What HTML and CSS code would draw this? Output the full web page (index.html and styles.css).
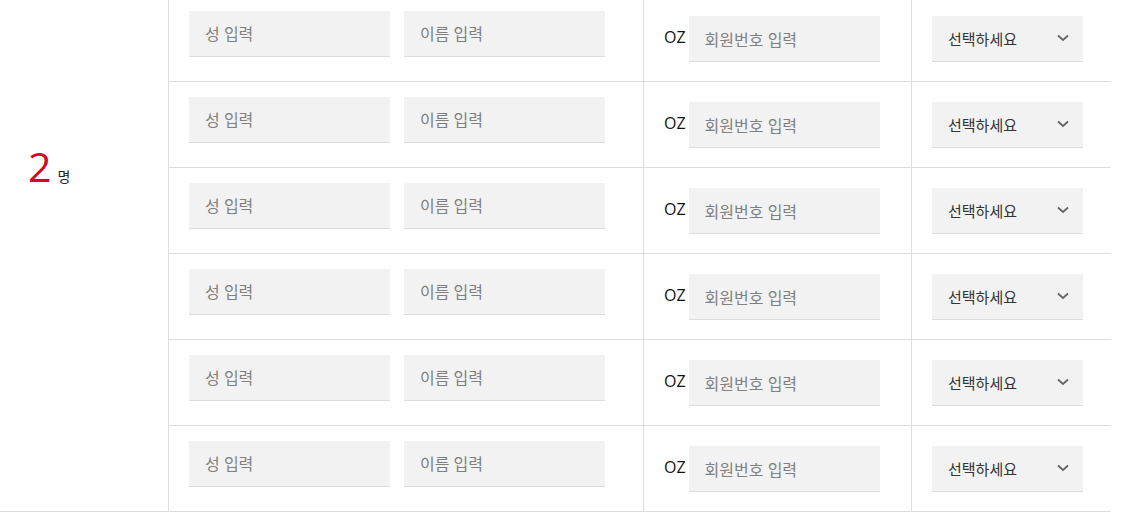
FILE: index.html
```html
<!DOCTYPE html>
<html lang="ko">
<head>
    <meta charset="UTF-8">
    <title>탑승객 정보</title>
    <link rel="stylesheet" href="styles.css">
</head>
<body>
    <div class="people">
        <div class="count"><span class="num">2</span><span class="unit">명</span></div>

        <div class="rows">
            <div class="row">
                <div class="name-cell">
                    <input type="text" class="field" placeholder="성 입력">
                    <input type="text" class="field" placeholder="이름 입력">
                </div>
                <div class="member-cell">
                    <span class="prefix">OZ</span>
                    <input type="text" class="field member" placeholder="회원번호 입력">
                </div>
                <div class="type-cell">
                    <div class="select">선택하세요
                        <svg width="12" height="8" viewBox="0 0 12 8"><polyline points="1,1.5 6,6 11,1.5" fill="none" stroke="#666" stroke-width="1.8"/></svg>
                    </div>
                </div>
            </div>
            <div class="row">
                <div class="name-cell">
                    <input type="text" class="field" placeholder="성 입력">
                    <input type="text" class="field" placeholder="이름 입력">
                </div>
                <div class="member-cell">
                    <span class="prefix">OZ</span>
                    <input type="text" class="field member" placeholder="회원번호 입력">
                </div>
                <div class="type-cell">
                    <div class="select">선택하세요
                        <svg width="12" height="8" viewBox="0 0 12 8"><polyline points="1,1.5 6,6 11,1.5" fill="none" stroke="#666" stroke-width="1.8"/></svg>
                    </div>
                </div>
            </div>
            <div class="row">
                <div class="name-cell">
                    <input type="text" class="field" placeholder="성 입력">
                    <input type="text" class="field" placeholder="이름 입력">
                </div>
                <div class="member-cell">
                    <span class="prefix">OZ</span>
                    <input type="text" class="field member" placeholder="회원번호 입력">
                </div>
                <div class="type-cell">
                    <div class="select">선택하세요
                        <svg width="12" height="8" viewBox="0 0 12 8"><polyline points="1,1.5 6,6 11,1.5" fill="none" stroke="#666" stroke-width="1.8"/></svg>
                    </div>
                </div>
            </div>
            <div class="row">
                <div class="name-cell">
                    <input type="text" class="field" placeholder="성 입력">
                    <input type="text" class="field" placeholder="이름 입력">
                </div>
                <div class="member-cell">
                    <span class="prefix">OZ</span>
                    <input type="text" class="field member" placeholder="회원번호 입력">
                </div>
                <div class="type-cell">
                    <div class="select">선택하세요
                        <svg width="12" height="8" viewBox="0 0 12 8"><polyline points="1,1.5 6,6 11,1.5" fill="none" stroke="#666" stroke-width="1.8"/></svg>
                    </div>
                </div>
            </div>
            <div class="row">
                <div class="name-cell">
                    <input type="text" class="field" placeholder="성 입력">
                    <input type="text" class="field" placeholder="이름 입력">
                </div>
                <div class="member-cell">
                    <span class="prefix">OZ</span>
                    <input type="text" class="field member" placeholder="회원번호 입력">
                </div>
                <div class="type-cell">
                    <div class="select">선택하세요
                        <svg width="12" height="8" viewBox="0 0 12 8"><polyline points="1,1.5 6,6 11,1.5" fill="none" stroke="#666" stroke-width="1.8"/></svg>
                    </div>
                </div>
            </div>
            <div class="row">
                <div class="name-cell">
                    <input type="text" class="field" placeholder="성 입력">
                    <input type="text" class="field" placeholder="이름 입력">
                </div>
                <div class="member-cell">
                    <span class="prefix">OZ</span>
                    <input type="text" class="field member" placeholder="회원번호 입력">
                </div>
                <div class="type-cell">
                    <div class="select">선택하세요
                        <svg width="12" height="8" viewBox="0 0 12 8"><polyline points="1,1.5 6,6 11,1.5" fill="none" stroke="#666" stroke-width="1.8"/></svg>
                    </div>
                </div>
            </div>
        </div>
    </div>
</body>
</html>
```

FILE: styles.css
```css
body {
    margin: 0;
    background: #fff;
    font-family: "Noto Sans", "Noto Sans CJK KR", sans-serif;
    color: #222;
}

.people {
    display: grid;
    grid-template-columns: 169px 942px;
    width: 1111px;
    margin-top: -5px;
    border-bottom: 1px solid #ddd;
}

.count {
    border-right: 1px solid #ddd;
    padding: 151px 0 0 28px;
    line-height: 1;
}

.num {
    font-family: "Open Sans", sans-serif;
    font-size: 41px;
    color: #d10a1e;
}

.unit {
    font-size: 14px;
    margin-left: 6px;
    color: #222;
}

.row {
    display: flex;
    height: 86px;
    box-sizing: border-box;
    border-top: 1px solid #ddd;
}

.row > div {
    box-sizing: border-box;
    flex-shrink: 0;
}

.field {
    box-sizing: border-box;
    width: 201px;
    height: 46px;
    margin: 0;
    padding: 0 16px;
    border: none;
    border-bottom: 1px solid #ddd;
    background: #f2f2f2;
    font-family: "Noto Sans", "Noto Sans CJK KR", sans-serif;
    font-size: 16px;
    color: #333;
    outline: none;
}

.field::placeholder {
    color: #808080;
}

.name-cell {
    width: 475px;
    border-right: 1px solid #ddd;
    display: flex;
    gap: 14px;
    align-items: flex-start;
    padding: 15px 0 0 20px;
}

.member-cell {
    width: 268px;
    border-right: 1px solid #ddd;
    display: flex;
    align-items: center;
    padding-left: 20px;
}

.prefix {
    font-family: "Open Sans", sans-serif;
    font-size: 16px;
    color: #111;
    margin-right: 3px;
    margin-top: -4px;
}

.field.member {
    width: 191px;
    padding-top: 3px;
}

.type-cell {
    width: 199px;
    display: flex;
    align-items: center;
    padding-left: 20px;
}

.select {
    box-sizing: border-box;
    width: 151px;
    height: 46px;
    display: flex;
    align-items: center;
    justify-content: space-between;
    padding: 0 14px 0 16px;
    background: #f2f2f2;
    border-bottom: 1px solid #ddd;
    font-size: 15px;
    color: #333;
}
```
